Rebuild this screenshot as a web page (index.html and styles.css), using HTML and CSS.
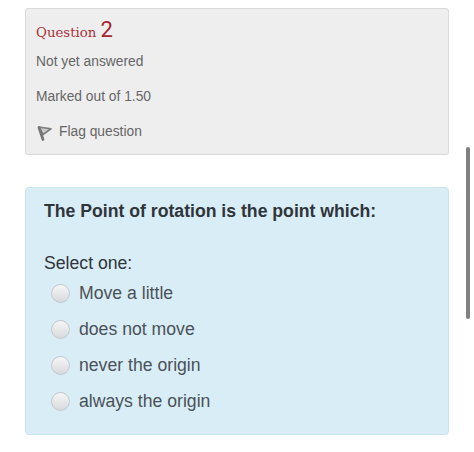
FILE: index.html
```html
<!DOCTYPE html>
<html lang="en">
<head>
  <meta charset="UTF-8">
  <title>Question 2</title>
  <link rel="stylesheet" href="styles.css">
</head>
<body>

<div class="info">
  <h3 class="no">Question <span class="number">2</span></h3>
  <div class="state">Not yet answered</div>
  <div class="grade">Marked out of 1.50</div>
  <div class="flag">
    <svg class="flag-icon" width="16" height="18" viewBox="0 0 16 18">
      <path d="M2 3 L14 4.8 L6 10.5 Z" fill="#ccc" stroke="#808080" stroke-width="1.7" stroke-linejoin="round"/>
      <path d="M2 3.5 L6 15.5" fill="none" stroke="#777" stroke-width="2.8" stroke-linecap="round"/>
    </svg>
    <span>Flag question</span>
  </div>
</div>

<div class="formulation">
  <div class="qtext">The Point of rotation is the point which:</div>
  <div class="prompt">Select one:</div>
  <div class="answer">
    <label><input type="radio" name="answer"><span>Move a little</span></label>
    <label><input type="radio" name="answer"><span>does not move</span></label>
    <label><input type="radio" name="answer"><span>never the origin</span></label>
    <label><input type="radio" name="answer"><span>always the origin</span></label>
  </div>
</div>

<div class="scrollbar"></div>

</body>
</html>
```

FILE: styles.css
```css
* {
  box-sizing: border-box;
}

body {
  margin: 0;
  padding: 8px 25px 0;
  height: 452px;
  overflow: hidden;
  background: #fff;
  font-family: "Liberation Sans", Arial, sans-serif;
}

.info {
  height: 147px;
  padding: 9px 10px;
  border: 1px solid #d9d9d9;
  border-radius: 3px;
  background: #eee;
  color: #666;
  font-size: 13.8px;
  line-height: 20px;
}

.no {
  margin: 0;
  height: 24px;
  line-height: 24px;
  font-family: "DejaVu Serif", serif;
  font-size: 13.3px;
  font-weight: normal;
  color: #a8323a;
}

.number {
  font-family: Roboto, sans-serif;
  font-size: 22px;
  color: #a6222e;
}

.state {
  margin-top: 10px;
}

.grade {
  margin-top: 15px;
}

.flag {
  display: flex;
  margin-top: 15px;
}

.flag-icon {
  margin: 2px 6px 0 1px;
}

.formulation {
  height: 248px;
  margin-top: 32px;
  padding: 13px 18px;
  border: 1px solid #c6e5ee;
  border-radius: 4px;
  background: #d9edf7;
  color: #2f353a;
  font-size: 17.65px;
  line-height: 20px;
}

.qtext {
  font-weight: bold;
}

.prompt {
  margin-top: 32px;
}

.answer {
  margin-top: 2px;
  padding-left: 7px;
}

.answer label {
  display: flex;
  align-items: center;
  height: 36px;
  color: #4b5257;
}

.answer input {
  appearance: none;
  width: 19px;
  height: 19px;
  margin: 0 9px 0 0;
  border: 1px solid #c3c8cf;
  border-radius: 50%;
  background: linear-gradient(#f6f6f7, #d8d9dd);
}

.scrollbar {
  position: absolute;
  top: 147px;
  left: 466px;
  width: 4px;
  height: 172px;
  border-radius: 2px;
  background: #808080;
}
```
